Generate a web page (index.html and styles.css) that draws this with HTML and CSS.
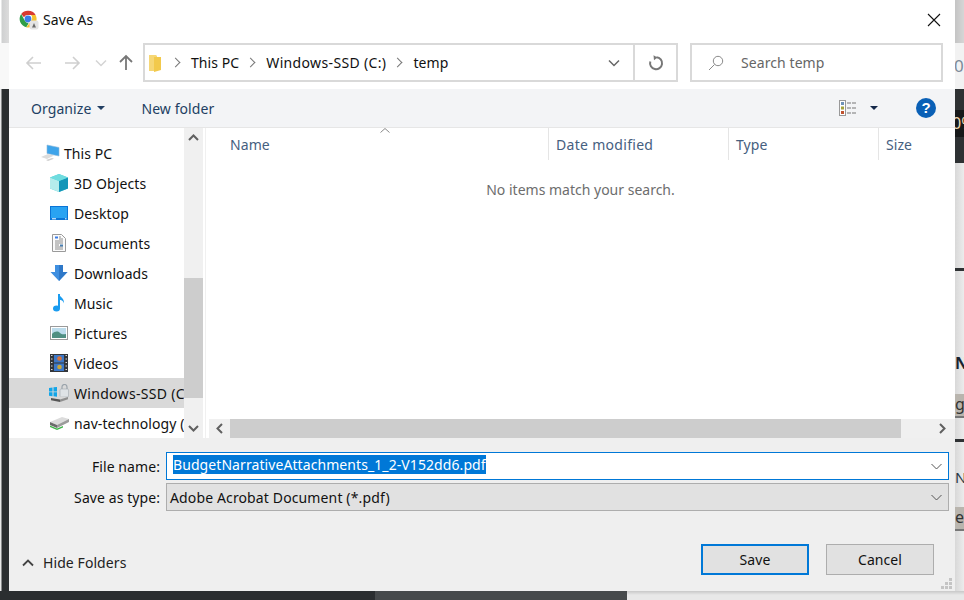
FILE: index.html
```html
<!DOCTYPE html>
<html lang="en">
<head>
    <meta charset="UTF-8">
    <title>Save As</title>
    <link rel="stylesheet" href="styles.css">
</head>

<body>

    <!-- page behind the dialog, only its edges show -->
    <div class="backdrop">
        <div class="back-left">
            <div class="bl-top"></div>
            <div class="bl-mid"></div>
            <div class="bl-dark"></div>
        </div>
        <div class="back-right">
            <div class="br-grey"></div>
            <div class="br-pale"><span>0</span></div>
            <div class="br-dark"><div class="br-black"><span>0%</span></div></div>
            <div class="br-light h105"></div>
            <div class="br-line"></div>
            <div class="br-light h123"><b>N</b></div>
            <div class="br-btn">g</div>
            <div class="br-light h21"></div>
            <div class="br-line"></div>
            <div class="br-light h65"><span class="br-na">Na</span></div>
            <div class="br-btn">e</div>
            <div class="br-light h60"></div>
        </div>
        <div class="back-bottom">
            <div class="bb-dark"></div>
            <div class="bb-mid"></div>
            <div class="bb-light"></div>
        </div>
    </div>

    <div class="dialog">

        <div class="titlebar">
            <svg class="app-icon" width="20" height="20" viewBox="0 0 20 20">
                <path d="M9 .8A8.5 8.5 0 0 1 16.6 5H9A4.2 4.2 0 0 0 5 7.3L2.200 4A8.500 8.500 0 0 1 9 .8z" fill="#d93b30"/>
                <path d="M2.200 4L5.900 10.700A4.200 4.200 0 0 0 9.600 13.200L7.300 17.200A8.500 8.500 0 0 1 2.200 4z" fill="#2f9e48"/>
                <path d="M16.600 5A8.500 8.500 0 0 1 9 17.500H7.300L11.900 11A4.200 4.200 0 0 0 12 5z" fill="#f5c22e"/>
                <circle cx="9" cy="9" r="3.400" fill="#3b7de8"/>
                <rect x="10.500" y="10.500" width="9" height="9" rx="2" fill="#e4e4e4"/>
                <path d="M13 17.500L15 13l2 4.500z" fill="#6b6b6b"/>
            </svg>
            <span class="title">Save As</span>
            <svg class="close" width="14" height="14" viewBox="0 0 14 14">
                <path d="M1 1l12 12M13 1L1 13" stroke="#111" stroke-width="1.100" fill="none"/>
            </svg>
        </div>

        <div class="addressrow">
            <div class="navbtns">
                <svg width="18" height="14" viewBox="0 0 18 14"><path d="M16 7H2M8 1L2 7l6 6" stroke="#cfcfcf" stroke-width="1.600" fill="none"/></svg>
                <svg class="nav-fwd" width="18" height="14" viewBox="0 0 18 14"><path d="M2 7h14M10 1l6 6-6 6" stroke="#cfcfcf" stroke-width="1.600" fill="none"/></svg>
                <svg class="nav-down" width="12" height="8" viewBox="0 0 12 8"><path d="M1 1.500l5 5 5-5" stroke="#d4d4d4" stroke-width="1.500" fill="none"/></svg>
                <svg class="nav-up" width="14" height="17" viewBox="0 0 14 17"><path d="M7 16V2M1 8l6-6 6 6" stroke="#777" stroke-width="1.800" fill="none"/></svg>
            </div>
            <div class="address">
                <svg class="crumb-folder" width="13" height="18" viewBox="0 0 13 18">
                    <path d="M0 1h7l1 1v15H0z" fill="#f6d776"/>
                    <path d="M5 3h7v13l-7 2z" fill="#f2c94c"/>
                </svg>
                <span class="crumb-sep"></span>
                <span class="crumb">This PC</span>
                <span class="crumb-sep"></span>
                <span class="crumb wide">Windows-SSD (C:)</span>
                <span class="crumb-sep"></span>
                <span class="crumb">temp</span>
                <svg class="addr-drop" width="12" height="8" viewBox="0 0 12 8"><path d="M1 1.500l5 5 5-5" stroke="#666" stroke-width="1.500" fill="none"/></svg>
                <div class="refresh">
                    <svg width="16" height="16" viewBox="0 0 16 16">
                        <path d="M8.500 2.200A6 6 0 1 1 2.300 6.500" stroke="#777" stroke-width="2" fill="none"/>
                        <path d="M5.500 .2l4 2.200-3.500 2.800z" fill="#777"/>
                    </svg>
                </div>
            </div>
            <div class="search">
                <svg width="16" height="16" viewBox="0 0 16 16">
                    <circle cx="10" cy="6" r="4.700" stroke="#8a8a8a" fill="none"/>
                    <path d="M6.500 9.500L1 15" stroke="#8a8a8a" fill="none"/>
                </svg>
                <span>Search temp</span>
            </div>
        </div>

        <div class="ribbon">
            <span class="rib-btn">Organize</span>
            <span class="caret"></span>
            <span class="rib-btn newfolder">New folder</span>
            <svg class="view-icon" width="18" height="16" viewBox="0 0 18 16">
                <rect x=".5" y=".5" width="6" height="15" fill="#fff" stroke="#999"/>
                <rect x="2" y="2" width="3" height="3" fill="#6f93b8"/>
                <rect x="2" y="6.500" width="3" height="3" fill="#a3a23a"/>
                <rect x="2" y="11" width="3" height="3" fill="#c0512f"/>
                <path d="M8 3h10M8 8h10M8 13h10" stroke="#777" stroke-dasharray="4 1"/>
            </svg>
            <span class="caret dark"></span>
            <svg class="help" width="20" height="20" viewBox="0 0 20 20">
                <circle cx="10" cy="10" r="10" fill="#0a60b6"/>
                <text x="10" y="15" text-anchor="middle" class="help-mark">?</text>
            </svg>
        </div>

        <div class="main">
            <div class="nav">
                <div class="nav-list">
                    <div class="nav-item root">
                        <svg width="20" height="18" viewBox="0 0 20 18">
                            <path d="M7 1l12 2.500V12L7 9.500z" fill="#3ea4ea" stroke="#8fb9d8" stroke-width=".6"/>
                            <path d="M1 13l7-3 6 1.500-7 3.500z" fill="#dcdcdc"/>
                            <path d="M6 16l6-2 2 .8-6 2.200z" fill="#cfcfcf"/>
                        </svg>
                        <span>This PC</span>
                    </div>
                    <div class="nav-item">
                        <svg width="18" height="18" viewBox="0 0 18 18">
                            <path d="M9 0l9 3.500v11L9 18 0 14.500v-11z" fill="#4dd0d8"/>
                            <path d="M0 3.500L9 7v11L0 14.500z" fill="#b5ecec"/>
                            <path d="M9 7l9-3.500v11L9 18z" fill="#1496b8"/>
                            <path d="M9 0l9 3.500L9 7 0 3.500z" fill="#6fdcdf"/>
                        </svg>
                        <span>3D Objects</span>
                    </div>
                    <div class="nav-item">
                        <svg width="18" height="14" viewBox="0 0 18 14">
                            <rect width="18" height="14" fill="#0a74d6"/>
                            <rect x="1" y="1" width="16" height="11" fill="#29a3f2"/>
                            <path d="M2 12.800h4M15 12.800h1.500" stroke="#fff"/>
                        </svg>
                        <span>Desktop</span>
                    </div>
                    <div class="nav-item">
                        <svg width="18" height="18" viewBox="0 0 18 18">
                            <path d="M2.500 .5h9l4 4v13h-13z" fill="#fbfbfb" stroke="#9a9a9a"/>
                            <path d="M5 3.500h3" stroke="#3b7de8" stroke-width="2"/>
                            <path d="M9 3h2M9 5h4M5 7h8M5 9h8M5 11h4M5 13h8M5 15h8" stroke="#8c8c8c"/>
                            <path d="M10 10.500h3v2h-3z" fill="#4a7fb0"/>
                        </svg>
                        <span>Documents</span>
                    </div>
                    <div class="nav-item">
                        <svg width="18" height="18" viewBox="0 0 18 18">
                            <path d="M5 1h8v7h4.500L9 17 .5 8H5z" fill="#3f8fe0"/>
                            <path d="M9 1h4v7h4.500L9 17z" fill="#2f78c8"/>
                        </svg>
                        <span>Downloads</span>
                    </div>
                    <div class="nav-item">
                        <svg width="18" height="18" viewBox="0 0 18 18">
                            <path d="M9 0v14" stroke="#1a9cf0" stroke-width="2" fill="none"/>
                            <path d="M9 0c.5 3 5.500 4 5 9.500C13.300 6.500 11 6 9 5.500z" fill="#1a9cf0"/>
                            <ellipse cx="6.500" cy="14.500" rx="3.500" ry="3" fill="#1a9cf0"/>
                        </svg>
                        <span>Music</span>
                    </div>
                    <div class="nav-item">
                        <svg width="18" height="14" viewBox="0 0 18 14">
                            <rect x=".5" y=".5" width="17" height="13" fill="#fff" stroke="#9a9a9a"/>
                            <rect x="2" y="2" width="14" height="10" fill="#bcdcec"/>
                            <path d="M2 8c3-3 6-3 8-1s4 1 6 1v4H2z" fill="#4f8f82"/>
                        </svg>
                        <span>Pictures</span>
                    </div>
                    <div class="nav-item">
                        <svg width="18" height="18" viewBox="0 0 18 18">
                            <rect width="18" height="18" fill="#33363a"/>
                            <path d="M1 1.500h1.500M1 5h1.500M1 8.500h1.500M1 12h1.500M1 15.500h1.500M15.500 1.500H17M15.500 5H17M15.500 8.500H17M15.500 12H17M15.500 15.500H17" stroke="#d8d8d8"/>
                            <rect x="4" y="1" width="10" height="7.500" fill="#3c78c8"/>
                            <rect x="4" y="9.500" width="10" height="7.500" fill="#3c78c8"/>
                            <circle cx="9.500" cy="4.500" r="2.300" fill="#d8733a"/>
                            <circle cx="9.500" cy="13" r="2.300" fill="#c9a83a"/>
                        </svg>
                        <span>Videos</span>
                    </div>
                    <div class="nav-item selected">
                        <svg width="21" height="18" viewBox="0 0 21 18">
                            <path d="M1 4l3.500-.5v4H1zM5.500 3.300L9 3v4.500H5.500zM1 8.300h3.500v4L1 11.800zM5.500 8.300H9v4.500l-3.500-.5z" fill="#12a5e8"/>
                            <path d="M14 5V3a2.500 2.500 0 0 1 5 0v2" stroke="#9aa3ab" stroke-width="1.200" fill="none"/>
                            <rect x="12" y="5" width="8.500" height="8" rx="1" fill="#dfe3e6" stroke="#a3aab0" stroke-width=".6"/>
                            <path d="M3 14l9-1.500 8 .5-8 2.500z" fill="#d8d8d8"/>
                            <path d="M3 14l9 1.500V18l-9-1.700z" fill="#555"/>
                            <path d="M12 15.500l8-2.500v2.200L12 18z" fill="#8f8f8f"/>
                        </svg>
                        <span>Windows-SSD (C:)</span>
                    </div>
                    <div class="nav-item drive">
                        <svg width="21" height="14" viewBox="0 0 21 14">
                            <path d="M1 6l12-5 7 2-12 6z" fill="#dcdcdc"/>
                            <path d="M1 6l7 3v3L1 9z" fill="#6b6b6b"/>
                            <path d="M8 9l12-6v3L8 12z" fill="#9b9b9b"/>
                            <path d="M1 9.500l7 3 6-2.500v1.500L8 14l-7-3z" fill="#3fb54a"/>
                        </svg>
                        <span>nav-technology (D:)</span>
                    </div>
                </div>
            </div>

            <div class="vscroll">
                <svg class="sb-arrow" width="11" height="7" viewBox="0 0 11 7"><path d="M1 6l4.500-4.500L10 6" stroke="#606060" stroke-width="2" fill="none"/></svg>
                <div class="vtrack"><div class="vthumb"></div></div>
                <svg class="sb-arrow" width="11" height="7" viewBox="0 0 11 7"><path d="M1 1l4.500 4.500L10 1" stroke="#606060" stroke-width="2" fill="none"/></svg>
            </div>

            <div class="files">
                <div class="columns">
                    <div class="col col-name">Name
                        <svg class="sort" width="10" height="5" viewBox="0 0 10 5"><path d="M.5 4.500L5 .5l4.500 4" stroke="#8a8a8a" fill="none"/></svg>
                    </div>
                    <div class="col col-date">Date modified</div>
                    <div class="col col-type">Type</div>
                    <div class="col col-size">Size</div>
                </div>
                <div class="file-body">No items match your search.</div>
                <div class="hscroll">
                    <div class="hs-btn">
                        <svg width="7" height="11" viewBox="0 0 7 11"><path d="M6 1L1.500 5.500 6 10" stroke="#606060" stroke-width="2" fill="none"/></svg>
                    </div>
                    <div class="hthumb"></div>
                    <div class="hs-btn end">
                        <svg width="7" height="11" viewBox="0 0 7 11"><path d="M1 1l4.500 4.500L1 10" stroke="#606060" stroke-width="2" fill="none"/></svg>
                    </div>
                </div>
            </div>
        </div>

        <div class="bottom">
            <div class="field">
                <label class="field-label">File name:</label>
                <div class="combo active">
                    <span class="sel-text">BudgetNarrativeAttachments_1_2-V152dd6.pdf</span>
                    <svg width="11" height="7" viewBox="0 0 11 7"><path d="M.5 1l5 5 5-5" stroke="#555" fill="none"/></svg>
                </div>
            </div>
            <div class="field">
                <label class="field-label">Save as type:</label>
                <div class="combo">
                    <span class="type-text">Adobe Acrobat Document (*.pdf)</span>
                    <svg width="11" height="7" viewBox="0 0 11 7"><path d="M.5 1l5 5 5-5" stroke="#555" fill="none"/></svg>
                </div>
            </div>
            <div class="footer">
                <div class="hide-folders">
                    <svg width="12" height="8" viewBox="0 0 12 8"><path d="M1 6.500l5-5 5 5" stroke="#444" stroke-width="1.800" fill="none"/></svg>
                    <span>Hide Folders</span>
                </div>
                <div class="buttons">
                    <button class="btn default">Save</button>
                    <button class="btn">Cancel</button>
                </div>
            </div>
            <svg class="grip" width="12" height="11" viewBox="0 0 12 11">
                <path d="M9 0h3v3H9zM5 4h3v3H5zM9 4h3v3H9zM1 8h3v3H1zM5 8h3v3H5zM9 8h3v3H9z" fill="#c4c4c4"/>
            </svg>
        </div>

    </div>

</body>
</html>
```

FILE: styles.css
```css
* {
    box-sizing: border-box;
}

html, body {
    margin: 0;
    height: 100%;
}

body {
    position: relative;
    width: 964px;
    height: 600px;
    overflow: hidden;
    font-family: "Noto Sans", "Open Sans", sans-serif;
    font-size: 14px;
    letter-spacing: .08px;
    color: #1a1a1a;
    background: #e8e8e8;
}

/* page behind */
.backdrop {
    position: absolute;
    inset: 0;
    display: flex;
}

.back-left {
    width: 9px;
    display: flex;
    flex-direction: column;
}

.bl-top {
    height: 43px;
    background: linear-gradient(to right, #fff 0, #fff 1px, #cfd0d1 2px, #dcdcdc 9px);
}

.bl-mid {
    height: 46px;
    background: #f8f8f8;
}

.bl-dark {
    flex: 1;
    background: linear-gradient(to right, #e8e8e8 0, #e8e8e8 1px, #2b2e30 2px);
}

.back-right {
    position: absolute;
    left: 955px;
    top: 0;
    width: 9px;
    height: 591px;
    overflow: hidden;
    display: flex;
    flex-direction: column;
    background: linear-gradient(to right, #d8d8d8, #ececec);
}

.back-right > div {
    flex: none;
}

.br-grey {
    height: 43px;
    background: linear-gradient(to right, #c4c4c4, #d6d6d6);
}

.br-pale {
    height: 46px;
    padding-top: 12px;
    background: #f2f2f2;
    color: #7c8a99;
    font-size: 17px;
    line-height: 22px;
}

.br-pale span {
    margin-left: -1px;
}

.br-dark {
    height: 74px;
    padding-top: 21px;
    background: #2e3133;
}

.br-black {
    height: 27px;
    background: #17191a;
    color: #f0d8b0;
    font-size: 16px;
    line-height: 26px;
    white-space: nowrap;
    margin-left: -3px;
}

.br-light {
    white-space: nowrap;
}

.h105 { height: 105px; }
.h123 { height: 123px; padding-top: 82px; font-size: 16px; line-height: 20px; color: #1a2430; }
.h21 { height: 21px; }
.h65 { height: 65px; padding-top: 25px; font-size: 15px; line-height: 20px; color: #2a3a4a; }
.h60 { height: 60px; }

.br-line {
    height: 3px;
    background: #2e3133;
}

.br-btn {
    height: 24px;
    background: #b9b5ae;
    border-bottom: 2px solid #777;
    font-size: 16px;
    line-height: 20px;
    color: #333;
}

.back-bottom {
    position: absolute;
    left: 0;
    right: 0;
    top: 591px;
    height: 9px;
    display: flex;
}

.bb-dark {
    width: 375px;
    background: #2b2e30;
}

.bb-mid {
    width: 252px;
    background: #46494b;
}

.bb-light {
    flex: 1;
    background: linear-gradient(to bottom, #c8c8c8, #e8e8e8 4px);
}

/* dialog window */
.dialog {
    position: absolute;
    left: 9px;
    top: 0;
    width: 946px;
    height: 591px;
    background: #fff;
    display: flex;
    flex-direction: column;
}

.titlebar {
    height: 43px;
    flex: none;
    display: flex;
    align-items: center;
    padding: 0 14px 4px 10px;
}

.app-icon {
    flex: none;
}

.title {
    margin-left: 4px;
    color: #111;
}

.close {
    margin-left: auto;
}

.addressrow {
    height: 39px;
    flex: none;
    display: flex;
}

.navbtns {
    width: 134px;
    display: flex;
    align-items: center;
    padding-left: 16px;
}

.nav-fwd {
    margin-left: 20px;
}

.nav-down {
    margin-left: 14px;
}

.nav-up {
    margin-left: 12px;
}

.address {
    width: 535px;
    display: flex;
    align-items: center;
    border: 2px solid #d9d9d9;
    padding-left: 4px;
    color: #111;
}

.crumb-folder {
    margin-right: 10px;
}

.crumb-sep {
    width: 7px;
    height: 7px;
    border-top: 1.500px solid #777;
    border-right: 1.500px solid #777;
    transform: rotate(45deg);
    margin-right: 12px;
    flex: none;
}

.crumb {
    margin-right: 8px;
}

.crumb.wide {
    letter-spacing: .35px;
}

.addr-drop {
    margin-left: auto;
    margin-right: 13px;
}

.refresh {
    width: 43px;
    height: 100%;
    border-left: 2px solid #d9d9d9;
    display: flex;
    align-items: center;
    justify-content: center;
    padding-left: 1px;
}

.search {
    width: 253px;
    margin-left: 12px;
    border: 2px solid #d9d9d9;
    display: flex;
    align-items: center;
    gap: 17px;
    padding-left: 16px;
    color: #666;
}

.ribbon {
    margin-top: 7px;
    height: 39px;
    flex: none;
    display: flex;
    align-items: center;
    background: #f3f4f6;
    border-bottom: 1px solid #e6e6e6;
    padding-left: 22px;
    padding-right: 19px;
}

.rib-btn {
    color: #223f63;
}

.caret {
    width: 0;
    height: 0;
    margin-left: 6px;
    border-left: 4px solid transparent;
    border-right: 4px solid transparent;
    border-top: 4px solid #223f63;
}

.newfolder {
    margin-left: 36px;
}

.view-icon {
    margin-left: auto;
}

.caret.dark {
    margin-left: 13px;
    border-top-color: #14284a;
}

.help {
    margin-left: 38px;
}

.help-mark {
    font-family: "Liberation Sans", sans-serif;
    font-weight: bold;
    font-size: 15px;
    fill: #fff;
}

/* nav pane and file list */
.main {
    height: 310px;
    flex: none;
    display: flex;
}

.nav {
    width: 175px;
    flex: none;
    overflow: hidden;
}

.nav-list {
    padding-top: 10px;
}

.nav-item {
    position: relative;
    height: 30px;
    display: flex;
    align-items: center;
    padding-left: 65px;
    white-space: nowrap;
    color: #111;
}

.nav-item svg {
    position: absolute;
    left: 41px;
    top: 50%;
    transform: translateY(-50%);
}

.nav-item.root {
    padding-left: 55px;
}

.nav-item.root svg {
    left: 31px;
}

.nav-item.drive svg {
    left: 40px;
}

.nav-item.selected {
    background: #d9d9d9;
    letter-spacing: .3px;
}

.nav-item.selected svg {
    left: 39px;
}

.vscroll {
    width: 19px;
    flex: none;
    display: flex;
    flex-direction: column;
    align-items: center;
    background: #f0f0f0;
    padding: 6px 0;
}

.vtrack {
    flex: 1;
    width: 100%;
    padding-top: 137px;
}

.vthumb {
    height: 120px;
    background: #cdcdcd;
}

.vscroll .sb-arrow {
    flex: none;
}

.files {
    flex: 1;
    min-width: 0;
    display: flex;
    flex-direction: column;
    margin-left: 2px;
    border-left: 1px solid #f0f0f0;
}

.columns {
    height: 32px;
    flex: none;
    display: flex;
    color: #46607f;
}

.col {
    position: relative;
    display: flex;
    align-items: center;
    padding-left: 7px;
    border-right: 1px solid #e5e5e5;
}

.col-name {
    width: 343px;
    padding-left: 24px;
}

.col-date {
    width: 180px;
    letter-spacing: .3px;
}

.col-type {
    width: 150px;
}

.col-size {
    flex: 1;
    border-right: none;
}

.sort {
    position: absolute;
    left: 174px;
    top: 0;
}

.file-body {
    flex: 1;
    padding-top: 20px;
    text-align: center;
    letter-spacing: 0;
    color: #6d6d6d;
}

.hscroll {
    height: 19px;
    flex: none;
    display: flex;
    margin-left: 3px;
    background: #f0f0f0;
}

.hs-btn {
    width: 21px;
    display: flex;
    align-items: center;
    justify-content: center;
}

.hs-btn.end {
    margin-left: auto;
    width: 25px;
}

.hthumb {
    width: 671px;
    background: #cdcdcd;
}

/* bottom panel */
.bottom {
    position: relative;
    flex: 1;
    background: #efefef;
    padding: 14px 6px 0 0;
}

.field {
    display: flex;
    align-items: center;
    margin-bottom: 3px;
}

.field-label {
    width: 151px;
    text-align: right;
    margin-right: 6px;
    color: #111;
}

.combo {
    flex: 1;
    height: 28px;
    display: flex;
    align-items: center;
    justify-content: space-between;
    padding: 0 6px 0 3px;
    background: #e1e1e1;
    border: 1px solid #adadad;
    color: #111;
}

.combo.active {
    background: #fff;
    border-color: #0078d7;
    padding-left: 6px;
}

.sel-text {
    background: #0078d7;
    color: #fff;
    line-height: 19px;
    margin-bottom: 3px;
}

.type-text {
    letter-spacing: .13px;
}

.footer {
    display: flex;
    justify-content: space-between;
    align-items: flex-start;
    margin-top: 33px;
    padding: 0 15px 0 13px;
}

.hide-folders {
    display: flex;
    align-items: center;
    gap: 9px;
    margin-top: 9px;
    color: #222;
}

.buttons {
    display: flex;
    gap: 17px;
}

.btn {
    width: 108px;
    height: 31px;
    padding: 0;
    background: #e1e1e1;
    border: 1px solid #adadad;
    font: inherit;
    letter-spacing: inherit;
    color: #111;
}

.btn.default {
    border: 2px solid #0078d7;
}

.grip {
    position: absolute;
    right: 3px;
    bottom: 2px;
}
```
